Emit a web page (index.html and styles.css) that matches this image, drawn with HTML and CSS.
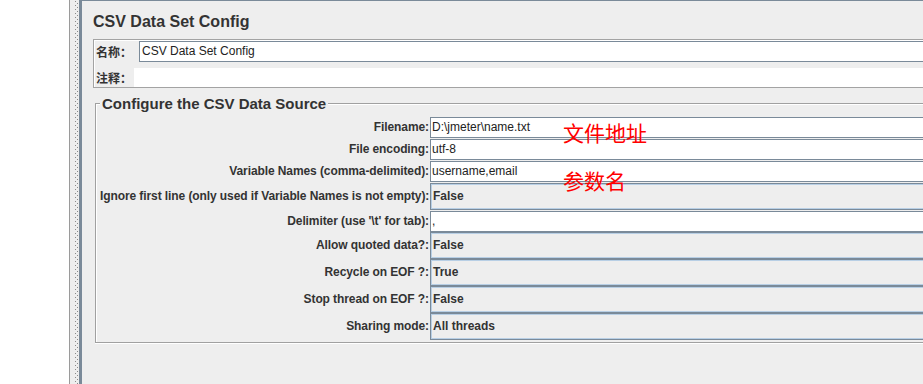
FILE: index.html
```html
<!DOCTYPE html>
<html lang="zh">
<head>
    <meta charset="UTF-8">
    <meta name="viewport" content="width=device-width, initial-scale=1.0">
    <title>CSV Data Set Config</title>
    <link rel="stylesheet" href="styles.css">
</head>
<body>
    <div class="app">
        <div class="tree"></div>
        <div class="divider"></div>

        <div class="panel">
            <h1 class="title">CSV Data Set Config</h1>

            <div class="name-box">
                <div class="name-row">
                    <span class="name-label">名称：</span>
                    <div class="name-field">CSV Data Set Config</div>
                </div>
                <div class="comment-row">
                    <span class="comment-label">注释：</span>
                    <div class="comment-area"></div>
                </div>
            </div>

            <fieldset class="source">
                <legend>Configure the CSV Data Source</legend>

                <div class="form-row row-text">
                    <span class="form-label">Filename:</span>
                    <div class="text-field">D:\jmeter\name.txt</div>
                </div>
                <div class="form-row row-text">
                    <span class="form-label">File encoding:</span>
                    <div class="text-field">utf-8</div>
                </div>
                <div class="form-row row-text">
                    <span class="form-label">Variable Names (comma-delimited):</span>
                    <div class="text-field">username,email</div>
                </div>
                <div class="form-row row-combo row-spaced">
                    <span class="form-label">Ignore first line (only used if Variable Names is not empty):</span>
                    <div class="combo">False</div>
                </div>
                <div class="form-row row-text row-tight">
                    <span class="form-label">Delimiter (use '\t' for tab):</span>
                    <div class="text-field">,</div>
                </div>
                <div class="form-row row-combo">
                    <span class="form-label">Allow quoted data?:</span>
                    <div class="combo">False</div>
                </div>
                <div class="form-row row-combo">
                    <span class="form-label">Recycle on EOF ?:</span>
                    <div class="combo">True</div>
                </div>
                <div class="form-row row-combo">
                    <span class="form-label">Stop thread on EOF ?:</span>
                    <div class="combo">False</div>
                </div>
                <div class="form-row row-combo">
                    <span class="form-label">Sharing mode:</span>
                    <div class="combo">All threads</div>
                </div>
            </fieldset>
        </div>
    </div>

    <!-- red notes drawn over the screenshot -->
    <div class="note note-file">文件地址</div>
    <div class="note note-vars">参数名</div>
</body>
</html>
```

FILE: styles.css
```css
body {
    margin: 0;
    width: 923px;
    height: 384px;
    overflow: hidden;
    position: relative;
    background: #fff;
    font-family: "Liberation Sans", Arial, "Noto Sans CJK SC", sans-serif;
    color: #333;
}
.app {
    display: flex;
    height: 384px;
}
.tree {
    flex: none;
    width: 69px;
    background: #fff;
    border-right: 1px solid #9a9a9a;
}
.divider {
    flex: none;
    width: 9px;
    background-color: #eeeeee;
    background-image: linear-gradient(#8a8a8a 1px, transparent 1px),
                      linear-gradient(#8a8a8a 1px, transparent 1px);
    background-size: 1px 4px;
    background-position: 5px 1px, 7px 3px;
    background-repeat: repeat-y;
}
.panel {
    flex: none;
    width: 1000px;
    background: #eeeeee;
    border-left: 3px solid #7a8a99;
    border-top: 1px solid #7a8a99;
    padding: 10px 0 0 11px;
}
.title {
    margin: 0;
    font-size: 16px;
    line-height: 21px;
    font-weight: bold;
    color: #333;
}
.name-box {
    margin-top: 7px;
    border: 1px solid #a3a3a3;
    box-shadow: inset 1px 1px 0 #fff;
    padding: 1px 0 0 2px;
}
.name-row {
    display: flex;
    align-items: center;
    height: 21px;
}
.comment-row {
    display: flex;
    align-items: center;
    height: 19px;
    margin-top: 6px;
}
.name-label,
.comment-label {
    flex: none;
    font-family: "Noto Sans CJK SC", sans-serif;
    font-size: 12px;
    font-weight: bold;
    color: #333;
    white-space: nowrap;
}
.name-label {
    width: 43px;
}
.comment-label {
    width: 38px;
}
.name-field {
    flex: 1;
    height: 21px;
    box-sizing: border-box;
    border: 1px solid #7a8a99;
    background: #fff;
    padding-left: 2px;
    font-size: 12px;
    line-height: 19px;
    color: #222;
}
.comment-area {
    flex: 1;
    height: 19px;
    background: #fff;
}
.source {
    margin: 7px 0 0 2px;
    padding: 5px 0 2px 4px;
    border: 1px solid #a0a0a0;
    box-shadow: inset 1px 1px 0 #fff, 0 1px 0 #fff;
    min-width: 0;
}
.source legend {
    padding: 0 2px;
    font-size: 15px;
    line-height: 17px;
    font-weight: bold;
    color: #333;
    background: #eeeeee;
}
.form-row {
    display: flex;
    align-items: flex-start;
}
.form-label {
    flex: none;
    width: 329px;
    margin-right: 1px;
    text-align: right;
    font-size: 12px;
    font-weight: bold;
    letter-spacing: -0.09px;
    color: #333;
    white-space: nowrap;
}
.row-text {
    height: 22px;
}
.row-text .form-label {
    line-height: 21px;
}
.row-combo {
    height: 27px;
}
.row-combo .form-label {
    line-height: 27px;
}
.row-spaced {
    height: 28px;
}
.row-tight {
    height: 21px;
}
.text-field {
    flex: 1;
    height: 21px;
    box-sizing: border-box;
    border: 1px solid #7a8a99;
    background: #fff;
    padding-left: 1px;
    font-size: 12px;
    line-height: 19px;
    color: #222;
}
.combo {
    flex: 1;
    height: 27px;
    box-sizing: border-box;
    border: 1px solid #7a8a99;
    box-shadow: inset 0 0 0 1px #b8cfe5;
    padding-left: 2px;
    font-size: 12px;
    font-weight: bold;
    line-height: 25px;
    color: #333;
}
.note {
    position: absolute;
    left: 563px;
    font-family: "Noto Sans CJK SC", sans-serif;
    font-size: 21px;
    line-height: 22px;
    color: #ff0000;
    white-space: nowrap;
}
.note-file {
    top: 121px;
}
.note-vars {
    top: 169px;
}
```
